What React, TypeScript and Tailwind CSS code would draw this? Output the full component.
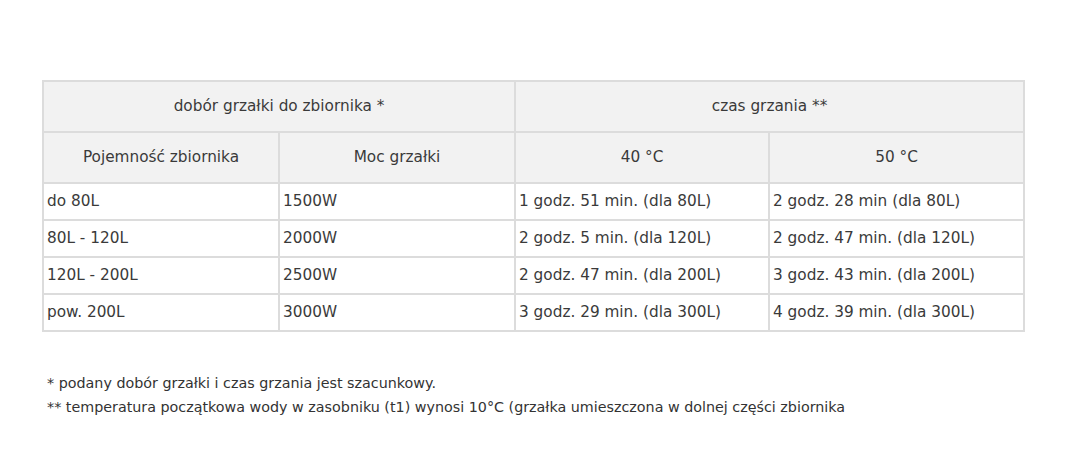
import React from "react";

const rows = [
  ["do 80L", "1500W", "1 godz. 51 min. (dla 80L)", "2 godz. 28 min (dla 80L)"],
  ["80L - 120L", "2000W", "2 godz. 5 min. (dla 120L)", "2 godz. 47 min. (dla 120L)"],
  ["120L - 200L", "2500W", "2 godz. 47 min. (dla 200L)", "3 godz. 43 min. (dla 200L)"],
  ["pow. 200L", "3000W", "3 godz. 29 min. (dla 300L)", "4 godz. 39 min. (dla 300L)"],
];

export default function App() {
  return (
    <div
      className="w-[1085px] h-[467px] bg-white text-[#3a3a3a] pt-[80px] pl-[42px]"
      style={{ fontFamily: '"DejaVu Sans", "Noto Sans", sans-serif' }}
    >
      <table className="border-collapse text-[15.3px] w-[981px] table-fixed">
        <colgroup>
          <col className="w-[236px]" />
          <col className="w-[236px]" />
          <col className="w-[254px]" />
          <col className="w-[255px]" />
        </colgroup>
        <thead>
          <tr className="bg-[#f2f2f2] h-[51px]">
            <th colSpan={2} className="border-2 border-[#dcdcdc] font-normal text-center">
              dobór grzałki do zbiornika *
            </th>
            <th colSpan={2} className="border-2 border-[#dcdcdc] font-normal text-center">
              czas grzania **
            </th>
          </tr>
          <tr className="bg-[#f2f2f2] h-[51px]">
            <th className="border-2 border-[#dcdcdc] font-normal text-center">Pojemność zbiornika</th>
            <th className="border-2 border-[#dcdcdc] font-normal text-center">Moc grzałki</th>
            <th className="border-2 border-[#dcdcdc] font-normal text-center">40 °C</th>
            <th className="border-2 border-[#dcdcdc] font-normal text-center">50 °C</th>
          </tr>
        </thead>
        <tbody>
          {rows.map((r, i) => (
            <tr key={i} className="h-[37px]">
              {r.map((c, j) => (
                <td key={j} className="border-2 border-[#dcdcdc] pl-[3px] text-left whitespace-nowrap">
                  {c}
                </td>
              ))}
            </tr>
          ))}
        </tbody>
      </table>
      <div className="mt-[39px] pl-[5px] text-[14.3px] leading-[24px] text-[#333]">
        <p>* podany dobór grzałki i czas grzania jest szacunkowy.</p>
        <p>** temperatura początkowa wody w zasobniku (t1) wynosi 10°C (grzałka umieszczona w dolnej części zbiornika</p>
      </div>
    </div>
  );
}
